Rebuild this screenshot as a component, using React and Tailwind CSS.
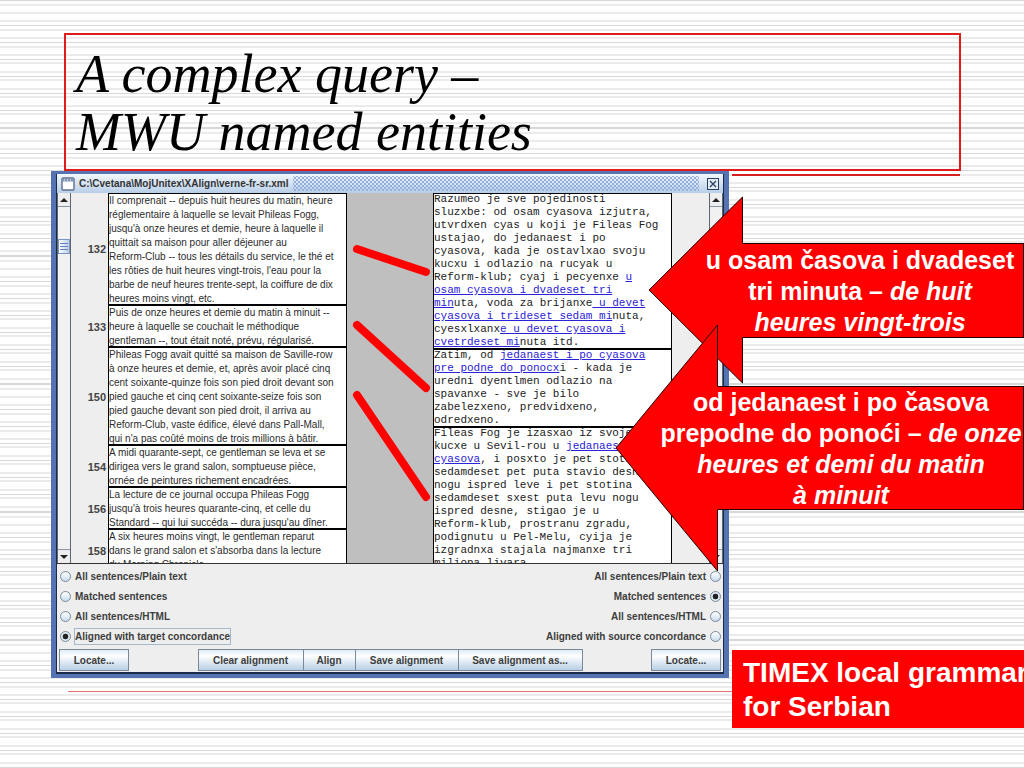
const frenchRows = [
  {
    id: 132,
    lines: [
      'Il comprenait -- depuis huit heures du matin, heure',
      'réglementaire à laquelle se levait Phileas Fogg,',
      "jusqu'à onze heures et demie, heure à laquelle il",
      'quittait sa maison pour aller déjeuner au',
      'Reform-Club -- tous les détails du service, le thé et',
      "les rôties de huit heures vingt-trois, l'eau pour la",
      'barbe de neuf heures trente-sept, la coiffure de dix',
      'heures moins vingt, etc.',
    ],
  },
  {
    id: 133,
    lines: [
      'Puis de onze heures et demie du matin à minuit --',
      'heure à laquelle se couchait le méthodique',
      'gentleman --, tout était noté, prévu, régularisé.',
    ],
  },
  {
    id: 150,
    lines: [
      'Phileas Fogg avait quitté sa maison de Saville-row',
      'à onze heures et demie, et, après avoir placé cinq',
      'cent soixante-quinze fois son pied droit devant son',
      'pied gauche et cinq cent soixante-seize fois son',
      'pied gauche devant son pied droit, il arriva au',
      'Reform-Club, vaste édifice, élevé dans Pall-Mall,',
      "qui n'a pas coûté moins de trois millions à bâtir.",
    ],
  },
  {
    id: 154,
    lines: [
      'A midi quarante-sept, ce gentleman se leva et se',
      'dirigea vers le grand salon, somptueuse pièce,',
      'ornée de peintures richement encadrées.',
    ],
  },
  {
    id: 156,
    lines: [
      'La lecture de ce journal occupa Phileas Fogg',
      "jusqu'à trois heures quarante-cinq, et celle du",
      "Standard -- qui lui succéda -- dura jusqu'au dîner.",
    ],
  },
  {
    id: 158,
    lines: [
      'A six heures moins vingt, le gentleman reparut',
      "dans le grand salon et s'absorba dans la lecture",
      'du Morning Chronicle.',
    ],
  },
]

// Parts in [brackets] are concordance matches and become links.
const serbianRows = [
  [
    'Razumeo je sve pojedinosti',
    'sluzxbe: od osam cyasova izjutra,',
    'utvrdxen cyas u koji je Fileas Fog',
    'ustajao, do jedanaest i po',
    'cyasova, kada je ostavlxao svoju',
    'kucxu i odlazio na rucyak u',
    'Reform-klub; cyaj i pecyenxe [u]',
    '[osam cyasova i dvadeset tri]',
    '[min]uta, voda za brijanxe[ u devet]',
    '[cyasova i trideset sedam mi]nuta,',
    'cyesxlxanx[e u devet cyasova i]',
    '[cvetrdeset mi]nuta itd.',
  ],
  [
    'Zatim, od [jedanaest i po cyasova]',
    '[pre podne do ponocx]i - kada je',
    'uredni dyentlmen odlazio na',
    'spavanxe - sve je bilo',
    'zabelezxeno, predvidxeno,',
    'odredxeno.',
  ],
  [
    'Fileas Fog je izasxao iz svoje',
    'kucxe u Sevil-rou u [jedanaest i po]',
    '[cyasova], i posxto je pet stotina',
    'sedamdeset pet puta stavio desnu',
    'nogu ispred leve i pet stotina',
    'sedamdeset sxest puta levu nogu',
    'ispred desne, stigao je u',
    'Reform-klub, prostranu zgradu,',
    'podignutu u Pel-Melu, cyija je',
    'izgradnxa stajala najmanxe tri',
    'miliona livara.',
  ],
]

const wideStripes = [4, 12, 20, 29, 37, 46, 54, 62, 71, 79, 88, 96, 105, 113, 122]
const thinStripes = [0, 25, 42, 59, 76, 93, 110, 127]

function PaperStripes() {
  return (
    <svg aria-hidden="true" className="absolute inset-0 size-full">
      <pattern id="stripes" width="64" height="128" patternUnits="userSpaceOnUse">
        {wideStripes.map((y) => (
          <rect key={y} y={y} width="64" height="2" fill="#ebebeb" />
        ))}
        {thinStripes.map((y) => (
          <rect key={y} y={y} width="64" height="1" fill="#d8d8d8" />
        ))}
      </pattern>
      <rect width="100%" height="100%" fill="url(#stripes)" />
    </svg>
  )
}

function MatchedLine({ text }) {
  return text.split(/(\[[^\]]*\])/).map((part, index) =>
    part.startsWith('[') ? (
      <a key={index} href="#match" className="text-[#2a22d8] underline">
        {part.slice(1, -1)}
      </a>
    ) : (
      <span key={index}>{part}</span>
    ),
  )
}

function ScrollBar({ thumb }) {
  return (
    <div className="flex w-[14px] shrink-0 flex-col border-r border-l border-[#5c6675] bg-[#f1f1f1]">
      <button
        type="button"
        aria-label="Scroll up"
        className="flex h-[14px] items-center justify-center border-b border-[#8a95a5] bg-[#eeeeee]"
      >
        <svg width="8" height="4" viewBox="0 0 8 4">
          <path d="M4 0 8 4H0z" fill="#222" />
        </svg>
      </button>
      <div className="flex-1 pt-8">
        {thumb && (
          <div className="flex h-[15px] flex-col items-center justify-center gap-[2px] border border-[#7b94bd] bg-gradient-to-r from-white to-[#b8cfe5]">
            <span className="h-px w-2 bg-[#6382bf]" />
            <span className="h-px w-2 bg-[#6382bf]" />
            <span className="h-px w-2 bg-[#6382bf]" />
          </div>
        )}
      </div>
      <button
        type="button"
        aria-label="Scroll down"
        className="flex h-[14px] items-center justify-center border-t border-[#8a95a5] bg-[#eeeeee]"
      >
        <svg width="8" height="4" viewBox="0 0 8 4">
          <path d="M0 0H8L4 4z" fill="#222" />
        </svg>
      </button>
    </div>
  )
}

function TitleBar() {
  return (
    <div className="flex h-[19px] items-center gap-1 bg-gradient-to-b from-[#f2f7fc] to-[#b8cfe8] px-1">
      <svg width="14" height="14" viewBox="0 0 14 14">
        <rect x="1" y="1" width="12" height="12" rx="1" fill="#fff" stroke="#5d6f8c" strokeWidth="1.4" />
        <path d="M1 3h12" stroke="#7f93b5" strokeWidth="3" />
        <path d="M3 3h1M6 3h1M9 3h1" stroke="#fff" />
      </svg>
      <span className="text-[10px] font-bold text-[#333333]">
        C:\Cvetana\MojUnitex\XAlign\verne-fr-sr.xml
      </span>
      <div className="h-[15px] flex-1 bg-[radial-gradient(#94b0da_25%,transparent_33%),radial-gradient(#94b0da_25%,transparent_33%)] bg-[length:4px_4px] bg-[position:0_0,2px_2px]" />
      <button type="button" aria-label="Close" className="ml-1">
        <svg width="12" height="12" viewBox="0 0 12 12" fill="none" stroke="#2c3e66">
          <rect x="0.5" y="0.5" width="11" height="11" fill="#e2ecf7" />
          <path d="M3 3l6 6M9 3l-6 6" strokeWidth="1.3" />
        </svg>
      </button>
    </div>
  )
}

function AlignmentView() {
  return (
    <div className="flex h-[371px] overflow-hidden border-b border-[#333]">
      <ScrollBar thumb />
      <div className="min-w-0 flex-1">
        {frenchRows.map((row) => (
          <div key={row.id} className="group flex">
            <div className="flex w-[37px] shrink-0 items-center justify-end pr-[2px] text-[11px] font-bold text-[#444]">
              {row.id}
            </div>
            <div className="min-w-0 flex-1 border-x border-b-2 border-black bg-white text-[10px] leading-[14px] whitespace-nowrap text-[#2c2c2c] group-first:border-t">
              <div className="-mb-[2px]">
                {row.lines.map((line) => (
                  <div key={line}>{line}</div>
                ))}
              </div>
            </div>
          </div>
        ))}
      </div>
      <svg width="86" height="370" viewBox="0 0 86 370" className="shrink-0 bg-[#bfbfbf]">
        <g stroke="#ff0000" strokeWidth="8" strokeLinecap="round">
          <path d="M10 56 79 79" />
          <path d="M10 132 79 195" />
          <path d="M10 202 79 304" />
        </g>
      </svg>
      <div className="min-w-0 flex-1">
        <div className="mr-[37px]">
          {serbianRows.map((lines) => (
            <div
              key={lines[0]}
              className="flow-root border-x border-b-2 border-black bg-white font-['Liberation_Mono',monospace] text-[11px] leading-[13px] whitespace-pre text-[#222] first:border-t"
            >
              <div className="-my-px">
                {lines.map((line) => (
                  <div key={line}>
                    <MatchedLine text={line} />
                  </div>
                ))}
              </div>
            </div>
          ))}
        </div>
      </div>
      <ScrollBar />
    </div>
  )
}

function RadioOption({ name, label, checked, focused, reverse }) {
  return (
    <label className={`flex h-5 items-center gap-1 ${reverse ? 'flex-row-reverse' : ''}`}>
      <input
        type="radio"
        name={name}
        defaultChecked={checked}
        className="size-[11px] appearance-none rounded-full border border-[#7a8a99] bg-gradient-to-b from-white to-[#c8dcee] checked:bg-[radial-gradient(#222_40%,#dfe9f3_50%)]"
      />
      <span className={focused ? 'outline outline-[#a3b8cc]' : ''}>{label}</span>
    </label>
  )
}

function PanelButton({ className, children }) {
  return (
    <button
      type="button"
      className={`h-[22px] border border-[#7a8a99] bg-gradient-to-b from-[#dfebf6] via-white via-30% to-[#b8cfe5] text-center font-bold whitespace-nowrap ${className}`}
    >
      {children}
    </button>
  )
}

function ControlPanel() {
  return (
    <div className="px-[2px] pt-[2px] pb-px text-[10px] font-bold text-[#3d3d3d]">
      <div className="flex justify-between pl-px">
        <fieldset>
          <RadioOption name="source" label="All sentences/Plain text" />
          <RadioOption name="source" label="Matched sentences" />
          <RadioOption name="source" label="All sentences/HTML" />
          <RadioOption name="source" label="Aligned with target concordance" checked focused />
        </fieldset>
        <fieldset>
          <RadioOption name="target" label="All sentences/Plain text" reverse />
          <RadioOption name="target" label="Matched sentences" checked reverse />
          <RadioOption name="target" label="All sentences/HTML" reverse />
          <RadioOption name="target" label="Aligned with source concordance" reverse />
        </fieldset>
      </div>
      <div className="mt-[3px] flex justify-between">
        <PanelButton className="w-[70px]">Locate...</PanelButton>
        <div className="flex">
          <PanelButton className="w-[106px]">Clear alignment</PanelButton>
          <PanelButton className="-ml-px w-[53px]">Align</PanelButton>
          <PanelButton className="-ml-px w-[104px]">Save alignment</PanelButton>
          <PanelButton className="-ml-px w-[125px]">Save alignment as...</PanelButton>
        </div>
        <PanelButton className="w-[70px]">Locate...</PanelButton>
      </div>
    </div>
  )
}

export default function App() {
  return (
    <main className="relative min-h-screen overflow-hidden bg-white font-['Liberation_Sans',Arial,sans-serif]">
      <PaperStripes />
      <hr className="absolute top-[174px] right-16 left-[732px] border-t-2 border-[#d42020]" />
      <div className="relative">
        <h1 className="mt-[33px] mr-[63px] ml-16 h-[138px] border-2 border-[#e01b1b] pt-[10px] pl-[10px] font-[Georgia,'Liberation_Serif',serif] text-[54px] leading-[58px] text-black italic">
          A complex query –<br />
          MWU named entities
        </h1>

        <section className="mr-[295px] ml-[51px] border-x-[5px] border-t-[3px] border-b-4 border-[#5573b0] bg-[#eeeeee]">
          <div className="border-x border-b-2 border-[#1c2a4a]">
            <TitleBar />
            <AlignmentView />
            <ControlPanel />
          </div>
        </section>
        <hr className="mt-[13px] mr-[292px] ml-[68px] border-t border-[#e57373]" />
      </div>

      <aside className="absolute top-[196px] right-0 left-[648px] flex items-center">
        <svg width="95" height="188" viewBox="0 0 95 188" className="z-10 -mr-px shrink-0">
          <path d="M94.5 47V1L1 94 94.5 187V141" fill="#ff0000" stroke="#200" />
        </svg>
        <div className="h-[95px] flex-1 border-y border-r border-[#200] bg-[#ff0000]" />
        <p className="absolute inset-0 z-20 flex flex-col justify-center pt-[2px] pl-12 text-center text-[25px] leading-[31px] font-bold whitespace-nowrap text-white">
          <span>u osam časova i dvadeset</span>
          <span>
            tri minuta – <em>de huit</em>
          </span>
          <em>heures vingt-trois</em>
        </p>
      </aside>

      <aside className="absolute top-[324px] right-0 left-[615px] flex items-center">
        <svg width="103" height="248" viewBox="0 0 103 248" className="z-10 -mr-px shrink-0">
          <path d="M102.5 62V1L1 124 102.5 247V186" fill="#ff0000" stroke="#200" />
        </svg>
        <div className="h-[124px] flex-1 border-y border-r border-[#200] bg-[#ff0000]" />
        <p className="absolute inset-0 z-20 flex flex-col items-center justify-center pt-[2px] pl-[43px] text-[25px] leading-[31px] font-bold whitespace-nowrap text-white">
          <span>od jedanaest i po časova</span>
          <span>
            prepodne do ponoći – <em>de onze</em>
          </span>
          <em>heures et demi du matin</em>
          <em>à minuit</em>
        </p>
      </aside>

      <p className="absolute top-[650px] right-0 left-[732px] bg-[#ff0000] pt-[6px] pb-1 pl-[11px] text-[28px] leading-[34px] font-bold whitespace-nowrap text-white">
        TIMEX local grammar
        <br />
        for Serbian
      </p>
    </main>
  )
}
